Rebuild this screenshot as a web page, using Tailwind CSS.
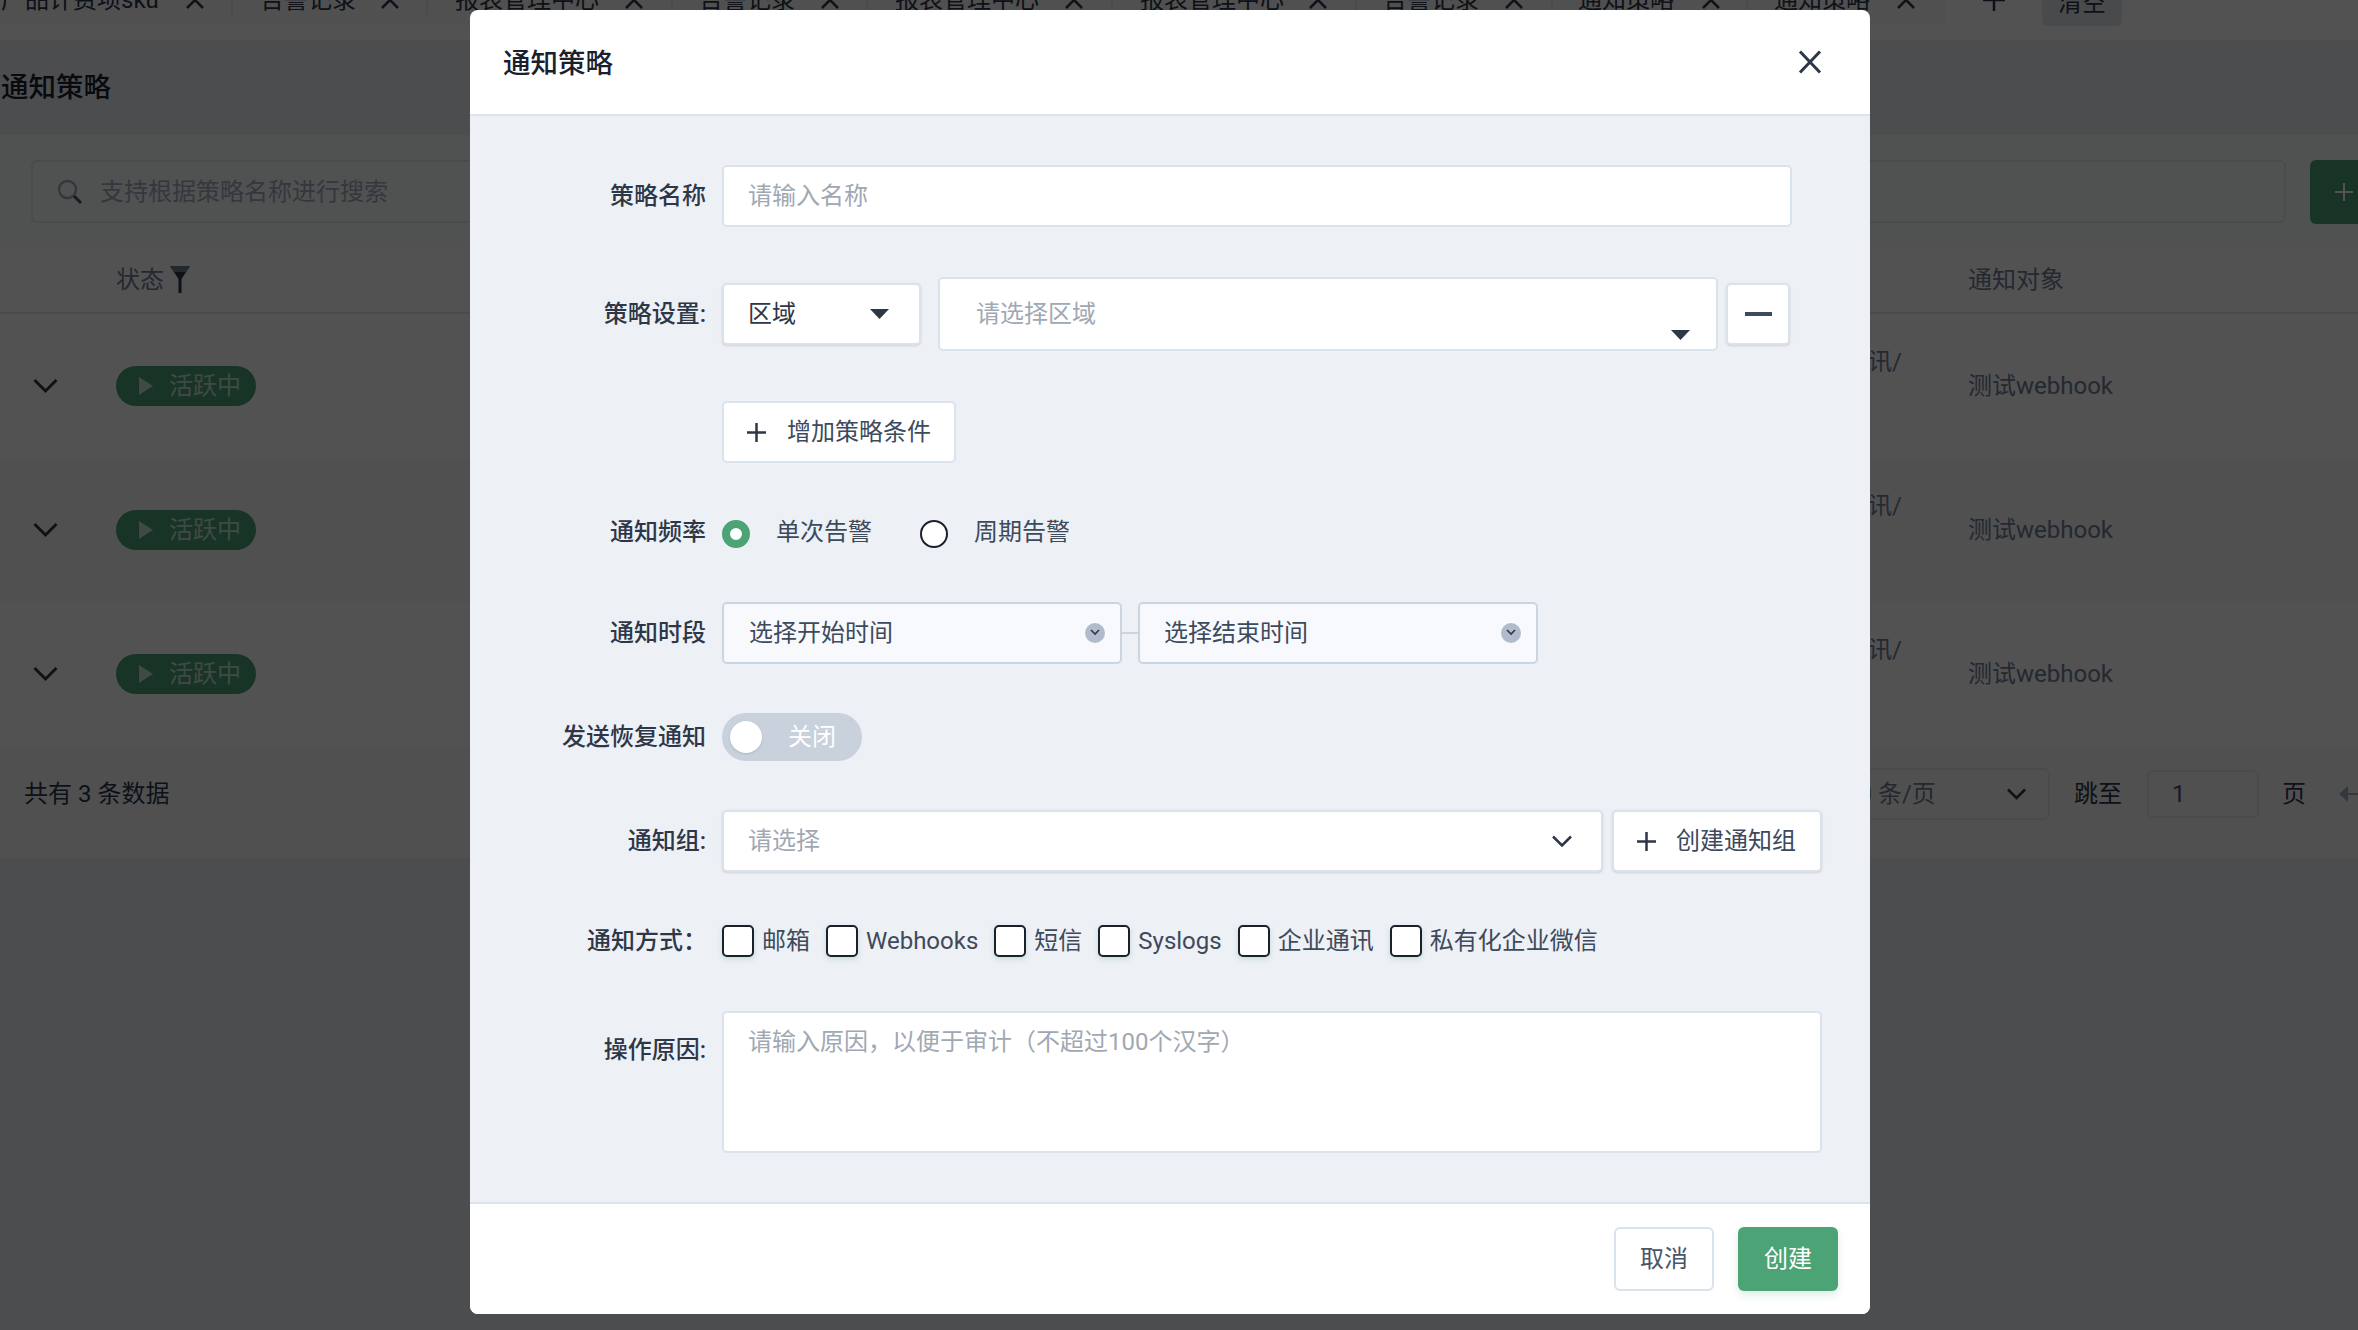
<!DOCTYPE html>
<html>
<head>
  <meta charset="utf-8">
  <meta name="viewport" content="width=device-width, initial-scale=1">
  <title>通知策略</title>
  <script src="https://cdn.jsdelivr.net/npm/@tailwindcss/browser@4"></script>
</head>
<body class="[font-family:Roboto,'Noto_Sans_CJK_SC',sans-serif] text-[24px] leading-9 text-[#2d3748]">
  <div class="relative w-[2358px] h-[1330px] overflow-hidden bg-[#edf0f5]">

    <!-- tabs, scrolled partly out of view -->
    <div class="flex h-[40px] bg-white overflow-hidden">
      <div class="flex h-[30px] -mt-[15px] bg-[#f7f8fa] box-content pb-[10px]">
        <div class="flex items-center h-[30px] w-[233px] pl-px border-r-2 border-[#e2e8f0]">
          <span class="whitespace-nowrap">产品计费项sku</span>
          <svg class="ml-[27px] shrink-0" width="18" height="18" viewBox="0 0 18 18" fill="none" stroke="#2d3748" stroke-width="2.5"><path d="M1 1l16 16M17 1L1 17"/></svg>
        </div>
        <div class="flex items-center h-[30px] w-[195px] pl-[27px] border-r-2 border-[#e2e8f0]"><span class="whitespace-nowrap">告警记录</span><svg class="ml-[25px] shrink-0" width="18" height="18" viewBox="0 0 18 18" fill="none" stroke="#2d3748" stroke-width="2.5"><path d="M1 1l16 16M17 1L1 17"/></svg></div>
        <div class="flex items-center h-[30px] w-[245px] pl-[27px] border-r-2 border-[#e2e8f0]"><span class="whitespace-nowrap">报表管理中心</span><svg class="ml-[26px] shrink-0" width="18" height="18" viewBox="0 0 18 18" fill="none" stroke="#2d3748" stroke-width="2.5"><path d="M1 1l16 16M17 1L1 17"/></svg></div>
        <div class="flex items-center h-[30px] w-[195px] pl-[26px] border-r-2 border-[#e2e8f0]"><span class="whitespace-nowrap">告警记录</span><svg class="ml-[26px] shrink-0" width="18" height="18" viewBox="0 0 18 18" fill="none" stroke="#2d3748" stroke-width="2.5"><path d="M1 1l16 16M17 1L1 17"/></svg></div>
        <div class="flex items-center h-[30px] w-[245px] pl-[27px] border-r-2 border-[#e2e8f0]"><span class="whitespace-nowrap">报表管理中心</span><svg class="ml-[26px] shrink-0" width="18" height="18" viewBox="0 0 18 18" fill="none" stroke="#2d3748" stroke-width="2.5"><path d="M1 1l16 16M17 1L1 17"/></svg></div>
        <div class="flex items-center h-[30px] w-[244px] pl-[27px] border-r-2 border-[#e2e8f0]"><span class="whitespace-nowrap">报表管理中心</span><svg class="ml-[25px] shrink-0" width="18" height="18" viewBox="0 0 18 18" fill="none" stroke="#2d3748" stroke-width="2.5"><path d="M1 1l16 16M17 1L1 17"/></svg></div>
        <div class="flex items-center h-[30px] w-[196px] pl-[26px] border-r-2 border-[#e2e8f0]"><span class="whitespace-nowrap">告警记录</span><svg class="ml-[26px] shrink-0" width="18" height="18" viewBox="0 0 18 18" fill="none" stroke="#2d3748" stroke-width="2.5"><path d="M1 1l16 16M17 1L1 17"/></svg></div>
        <div class="flex items-center h-[30px] w-[195px] pl-[25px] border-r-2 border-[#e2e8f0]"><span class="whitespace-nowrap">通知策略</span><svg class="ml-[28px] shrink-0" width="18" height="18" viewBox="0 0 18 18" fill="none" stroke="#2d3748" stroke-width="2.5"><path d="M1 1l16 16M17 1L1 17"/></svg></div>
        <div class="flex items-center h-[30px] w-[198px] pl-[26px]"><span class="whitespace-nowrap">通知策略</span><svg class="ml-[27px] shrink-0" width="18" height="18" viewBox="0 0 18 18" fill="none" stroke="#2d3748" stroke-width="2.5"><path d="M1 1l16 16M17 1L1 17"/></svg></div>
      </div>
      <div class="flex items-start ml-[37px]">
        <svg class="-mt-[11px]" width="22" height="22" viewBox="0 0 22 22" fill="none" stroke="#2d3748" stroke-width="2.5"><path d="M11 0v22M0 11h22"/></svg>
        <div class="flex items-center justify-center w-[80px] h-[46px] -mt-[20px] ml-[37px] rounded-[6px] bg-[#e2e5ea]">清空</div>
      </div>
    </div>

    <!-- page -->
    <div class="flex items-center h-[95px] pl-px text-[27.5px] font-medium text-[#1a202c]">通知策略</div>

    <div class="bg-white">
      <div class="flex h-[112px] pt-[25px] pl-[31px] bg-[#f9fafb]">
        <div class="flex items-center shrink-0 w-[2255px] h-[63px] pl-[24px] border-2 border-[#e2e8f0] rounded-[6px]">
          <svg width="26" height="26" viewBox="0 0 26 26" fill="none" stroke="#a0aec0" stroke-width="2.5"><circle cx="10.5" cy="10.5" r="8.5"/><path d="M17 17l7 7" stroke="#4a5568" stroke-width="3"/></svg>
          <input class="w-[700px] ml-[17px] outline-none placeholder:text-[#a0aec0]" placeholder="支持根据策略名称进行搜索">
        </div>
        <div class="flex items-center shrink-0 w-[120px] h-[64px] ml-[24px] pl-[25px] rounded-[6px] bg-[#4ca376]">
          <svg width="18" height="18" viewBox="0 0 18 18" stroke="#fff" stroke-width="2"><path d="M9 0v18M0 9h18"/></svg>
        </div>
      </div>

      <div class="flex items-center h-[67px] border-b-2 border-[#e2e8f0] text-[#718096]">
        <div class="w-[116px]"></div>
        <div class="flex items-center gap-[6px]">状态
          <svg width="20" height="27" viewBox="0 0 20 27"><path d="M0 0h20L11.5 13v14h-3V13z" fill="#2d3748"/><path d="M0 0h20L16 6H4z" fill="#718096"/></svg>
        </div>
        <div class="ml-auto w-[390px]">通知对象</div>
      </div>

      <div class="flex items-center h-[144px] bg-white text-[#718096]">
        <svg class="ml-[33px]" width="25" height="16" viewBox="0 0 25 16" fill="none" stroke="#2d3748" stroke-width="3"><path d="M1.5 2l11 11 11-11"/></svg>
        <div class="flex items-center w-[140px] h-[40px] ml-[58px] pl-[23px] rounded-full bg-[#4ca376] text-white">
          <svg width="14" height="18" viewBox="0 0 14 18" fill="#fff" fill-opacity=".7"><path d="M0 0l14 9L0 18z"/></svg><span class="ml-[16px] opacity-70 whitespace-nowrap">活跃中</span>
        </div>
        <div class="ml-auto w-[230px] mb-[2px] leading-[46px] whitespace-nowrap">邮箱/企业通讯/<br>短信</div>
        <div class="w-[390px]">测试webhook</div>
      </div>
      <div class="flex items-center h-[144px] bg-[#f7f8fa] text-[#718096]">
        <svg class="ml-[33px]" width="25" height="16" viewBox="0 0 25 16" fill="none" stroke="#2d3748" stroke-width="3"><path d="M1.5 2l11 11 11-11"/></svg>
        <div class="flex items-center w-[140px] h-[40px] ml-[58px] pl-[23px] rounded-full bg-[#4ca376] text-white">
          <svg width="14" height="18" viewBox="0 0 14 18" fill="#fff" fill-opacity=".7"><path d="M0 0l14 9L0 18z"/></svg><span class="ml-[16px] opacity-70 whitespace-nowrap">活跃中</span>
        </div>
        <div class="ml-auto w-[230px] mb-[2px] leading-[46px] whitespace-nowrap">邮箱/企业通讯/<br>短信</div>
        <div class="w-[390px]">测试webhook</div>
      </div>
      <div class="flex items-center h-[144px] bg-white text-[#718096]">
        <svg class="ml-[33px]" width="25" height="16" viewBox="0 0 25 16" fill="none" stroke="#2d3748" stroke-width="3"><path d="M1.5 2l11 11 11-11"/></svg>
        <div class="flex items-center w-[140px] h-[40px] ml-[58px] pl-[23px] rounded-full bg-[#4ca376] text-white">
          <svg width="14" height="18" viewBox="0 0 14 18" fill="#fff" fill-opacity=".7"><path d="M0 0l14 9L0 18z"/></svg><span class="ml-[16px] opacity-70 whitespace-nowrap">活跃中</span>
        </div>
        <div class="ml-auto w-[230px] mb-[2px] leading-[46px] whitespace-nowrap">邮箱/企业通讯/<br>短信</div>
        <div class="w-[390px]">测试webhook</div>
      </div>

      <div class="flex items-center h-[112px] pl-[24px] pb-[17px] bg-[#f7f8fa]">
        <span>共有 3 条数据</span>
        <div class="flex items-center ml-auto">
          <div class="flex items-center w-[250px] h-[52px] pl-[43px] pr-[22px] border-2 border-[#e2e8f0] rounded-[6px] text-[#718096]">
            <span class="whitespace-nowrap">10 条/页</span>
            <svg class="ml-auto" width="19" height="12" viewBox="0 0 19 12" fill="none" stroke="#2d3748" stroke-width="2.5"><path d="M1 1.5l8.5 8.5L18 1.5"/></svg>
          </div>
          <span class="ml-[24px]">跳至</span>
          <div class="flex items-center w-[112px] h-[48px] ml-[25px] pl-[23px] border-2 border-[#e2e8f0] rounded-[6px] text-[#4a5568]">1</div>
          <span class="ml-[23px]">页</span>
          <svg class="ml-[33px]" width="19" height="16" viewBox="0 0 19 16" fill="#a0aec0"><path d="M9 0v16L0 8z"/><path d="M9 7h10v2H9z"/></svg>
        </div>
      </div>
    </div>

    <!-- modal -->
    <div class="absolute inset-0 bg-black/[.68]"></div>
    <div class="absolute left-[470px] top-[10px] w-[1400px] h-[1304px] flex flex-col rounded-[8px] overflow-hidden bg-white">
      <div class="flex items-center justify-between shrink-0 h-[106px] pt-[3px] pl-[33px] pr-[48px] border-b-2 border-[#dce3ea]">
        <span class="text-[27.5px] font-medium text-[#1a202c]">通知策略</span>
        <svg class="-mt-[3px]" width="24" height="24" viewBox="0 0 24 24" fill="none" stroke="#2d3748" stroke-width="3"><path d="M2 1.5l20 21M22 1.5l-20 21"/></svg>
      </div>

      <div class="flex-1 bg-[#edf0f5]">
        <!-- 策略名称 -->
        <div class="flex items-center mt-[49px]">
          <label class="w-[236px] text-right font-medium">策略名称</label>
          <input class="w-[1070px] h-[62px] ml-[16px] px-[24px] bg-white border-2 border-[#dae2ec] rounded-[5px] outline-none placeholder:text-[#a0a8b3]" placeholder="请输入名称">
        </div>

        <!-- 策略设置 -->
        <div class="flex items-center mt-[50px]">
          <label class="w-[236px] text-right font-medium">策略设置:</label>
          <div class="flex items-center w-[199px] h-[62px] ml-[16px] pl-[24px] pr-[30px] bg-white border-2 border-[#dae2ec] rounded-[5px] shadow-sm">
            <span>区域</span>
            <svg class="ml-auto" width="19" height="10" viewBox="0 0 19 10" fill="#2d3748"><path d="M0 0h19L9.5 10z"/></svg>
          </div>
          <div class="flex items-center w-[780px] h-[74px] ml-[17px] pl-[36px] pr-[26px] bg-white border-2 border-[#dae2ec] rounded-[5px]">
            <span class="text-[#a0a8b3]">请选择区域</span>
            <svg class="ml-auto self-end mb-[9px]" width="19" height="10" viewBox="0 0 19 10" fill="#2d3748"><path d="M0 0h19L9.5 10z"/></svg>
          </div>
          <div class="flex items-center justify-center w-[64px] h-[62px] ml-[8px] bg-white border-2 border-[#dae2ec] rounded-[5px] shadow-sm">
            <div class="w-[27px] h-[4px] bg-[#3d4a5c]"></div>
          </div>
        </div>

        <!-- 增加策略条件 -->
        <div class="flex mt-[50px] pl-[252px]">
          <div class="flex items-center h-[62px] px-[23px] bg-white border-2 border-[#dae2ec] rounded-[5px] text-[#3d4a5c]">
            <svg width="19" height="19" viewBox="0 0 19 19" stroke="#2d3748" stroke-width="2.5"><path d="M9.5 0v19M0 9.5h19"/></svg>
            <span class="ml-[21px]">增加策略条件</span>
          </div>
        </div>

        <!-- 通知频率 -->
        <div class="flex items-center h-[28px] mt-[57px]">
          <label class="w-[236px] -mt-[4px] text-right font-medium">通知频率</label>
          <div class="w-[28px] h-[28px] ml-[16px] rounded-full border-[8px] border-[#4ca376] bg-white"></div>
          <span class="ml-[26px] -mt-[4px] text-[#3d4a5c]">单次告警</span>
          <div class="w-[28px] h-[28px] ml-[48px] rounded-full border-2 border-[#1a202c] bg-white"></div>
          <span class="ml-[26px] -mt-[4px] text-[#3d4a5c]">周期告警</span>
        </div>

        <!-- 通知时段 -->
        <div class="flex items-center mt-[54px]">
          <label class="w-[236px] text-right font-medium">通知时段</label>
          <div class="flex items-center w-[400px] h-[62px] ml-[16px] pl-[25px] pr-[15px] bg-[#f7f9fc] border-2 border-[#cbd5e0] rounded-[5px] text-[#3d4a5c]">
            <span>选择开始时间</span>
            <svg class="ml-auto" width="20" height="20" viewBox="0 0 20 20"><circle cx="10" cy="10" r="10" fill="#b0bccb"/><path d="M6 7l4 4 4-4" fill="none" stroke="#2d3748" stroke-width="1.6"/></svg>
          </div>
          <div class="w-[16px] h-[2px] bg-[#cbd5e0]"></div>
          <div class="flex items-center w-[400px] h-[62px] pl-[24px] pr-[15px] bg-[#f7f9fc] border-2 border-[#cbd5e0] rounded-[5px] text-[#3d4a5c]">
            <span>选择结束时间</span>
            <svg class="ml-auto" width="20" height="20" viewBox="0 0 20 20"><circle cx="10" cy="10" r="10" fill="#b0bccb"/><path d="M6 7l4 4 4-4" fill="none" stroke="#2d3748" stroke-width="1.6"/></svg>
          </div>
        </div>

        <!-- 发送恢复通知 -->
        <div class="flex items-center mt-[49px]">
          <label class="w-[236px] text-right font-medium">发送恢复通知</label>
          <div class="flex items-center w-[140px] h-[48px] ml-[16px] pl-[8px] rounded-full bg-[#c8d1dc]">
            <div class="w-[32px] h-[32px] rounded-full bg-white shadow-sm"></div>
            <span class="ml-[26px] text-white">关闭</span>
          </div>
        </div>

        <!-- 通知组 -->
        <div class="flex items-center mt-[49px]">
          <label class="w-[236px] text-right font-medium">通知组:</label>
          <div class="flex items-center w-[881px] h-[62px] ml-[16px] pl-[24px] pr-[29px] bg-white border-2 border-[#dae2ec] rounded-[5px] shadow-sm">
            <span class="text-[#a0a8b3]">请选择</span>
            <svg class="ml-auto" width="20" height="12" viewBox="0 0 20 12" fill="none" stroke="#2d3748" stroke-width="2.5"><path d="M1 1.5l9 9 9-9"/></svg>
          </div>
          <div class="flex items-center w-[210px] h-[62px] ml-[9px] px-[23px] bg-white border-2 border-[#dae2ec] rounded-[5px] shadow-sm text-[#3d4a5c]">
            <svg class="shrink-0" width="19" height="19" viewBox="0 0 19 19" stroke="#2d3748" stroke-width="2.5"><path d="M9.5 0v19M0 9.5h19"/></svg>
            <span class="ml-[20px] whitespace-nowrap">创建通知组</span>
          </div>
        </div>

        <!-- 通知方式 -->
        <div class="flex items-center h-[32px] mt-[53px]">
          <label class="w-[237px] text-right font-medium">通知方式：</label>
          <div class="flex items-center ml-[15px] gap-[16px] text-[#3d4a5c]">
            <div class="flex items-center gap-[8px]"><div class="w-[32px] h-[32px] bg-white border-2 border-[#1a202c] rounded-[5px] shadow-[0_2px_5px_rgba(76,163,118,0.25)]"></div><span>邮箱</span></div>
            <div class="flex items-center gap-[8px]"><div class="w-[32px] h-[32px] bg-white border-2 border-[#1a202c] rounded-[5px] shadow-[0_2px_5px_rgba(76,163,118,0.25)]"></div><span>Webhooks</span></div>
            <div class="flex items-center gap-[8px]"><div class="w-[32px] h-[32px] bg-white border-2 border-[#1a202c] rounded-[5px] shadow-[0_2px_5px_rgba(76,163,118,0.25)]"></div><span>短信</span></div>
            <div class="flex items-center gap-[8px]"><div class="w-[32px] h-[32px] bg-white border-2 border-[#1a202c] rounded-[5px] shadow-[0_2px_5px_rgba(76,163,118,0.25)]"></div><span>Syslogs</span></div>
            <div class="flex items-center gap-[8px]"><div class="w-[32px] h-[32px] bg-white border-2 border-[#1a202c] rounded-[5px] shadow-[0_2px_5px_rgba(76,163,118,0.25)]"></div><span>企业通讯</span></div>
            <div class="flex items-center gap-[8px]"><div class="w-[32px] h-[32px] bg-white border-2 border-[#1a202c] rounded-[5px] shadow-[0_2px_5px_rgba(76,163,118,0.25)]"></div><span>私有化企业微信</span></div>
          </div>
        </div>

        <!-- 操作原因 -->
        <div class="flex items-start mt-[54px]">
          <label class="w-[236px] pt-[21px] text-right font-medium">操作原因:</label>
          <textarea class="block w-[1100px] h-[142px] ml-[16px] px-[24px] py-[11px] bg-white border-2 border-[#dae2ec] rounded-[5px] outline-none resize-none placeholder:text-[#a0a8b3]" placeholder="请输入原因，以便于审计（不超过100个汉字）"></textarea>
        </div>
      </div>

      <div class="flex items-center justify-end gap-[24px] shrink-0 h-[112px] pr-[32px] bg-white border-t-2 border-[#dce3ea]">
        <div class="flex items-center justify-center w-[100px] h-[64px] border-2 border-[#dae2ec] rounded-[6px] text-[#4a5568]">取消</div>
        <div class="flex items-center justify-center w-[100px] h-[64px] rounded-[6px] bg-[#4ca376] text-white shadow-[0_4px_8px_rgba(76,163,118,0.2)]">创建</div>
      </div>
    </div>
  </div>
</body>
</html>
